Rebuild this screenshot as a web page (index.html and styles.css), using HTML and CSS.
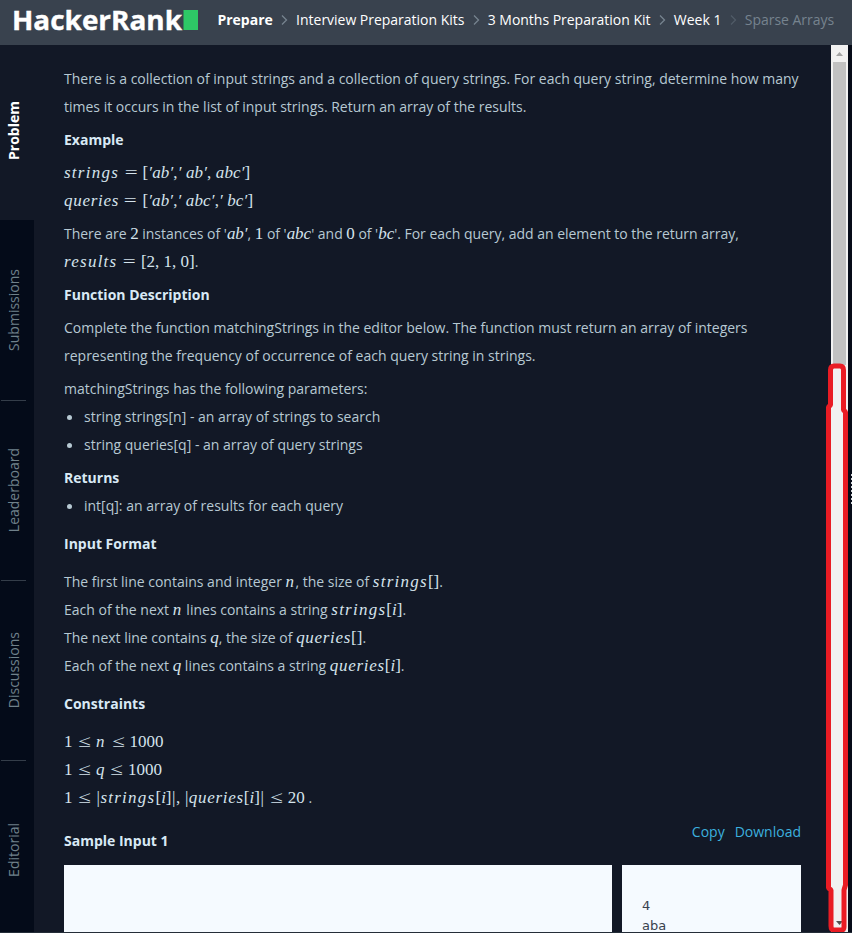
FILE: index.html
```html
<!DOCTYPE html>
<html lang="en">
<head>
<meta charset="utf-8">
<title>Sparse Arrays | HackerRank</title>
<link rel="stylesheet" href="styles.css">
</head>
<body>
<header class="topbar">
  <svg class="logo" width="186" height="45" viewBox="0 0 186 45"><text class="wordmark" x="-1" y="30" textLength="170" lengthAdjust="spacingAndGlyphs">HackerRank</text><rect x="170.500" y="10" width="14.500" height="20" fill="#2ec866"/></svg>
  <nav class="crumbs">
    <b>Prepare</b><svg class="chev" viewBox="0 0 8 12"><path d="M2 1.500L6.500 6L2 10.500"/></svg>
    <span>Interview Preparation Kits</span><svg class="chev" viewBox="0 0 8 12"><path d="M2 1.500L6.500 6L2 10.500"/></svg>
    <span>3 Months Preparation Kit</span><svg class="chev" viewBox="0 0 8 12"><path d="M2 1.500L6.500 6L2 10.500"/></svg>
    <span>Week 1</span><svg class="chev dim" viewBox="0 0 8 12"><path d="M2 1.500L6.500 6L2 10.500"/></svg>
    <span class="current">Sparse Arrays</span>
  </nav>
</header>
<div class="layout">
  <aside class="tabs">
    <div class="tab active"><span>Problem</span></div>
    <div class="tab"><span>Submissions</span></div>
    <div class="tab"><span>Leaderboard</span></div>
    <div class="tab"><span>Discussions</span></div>
    <div class="tab"><span>Editorial</span></div>
  </aside>
  <main class="content">
    <p>There is a collection of input strings and a collection of query strings. For each query string, determine how many<br>times it occurs in the list of input strings. Return an array of the results.</p>
    <h3>Example</h3>
    <p><span class="m list"><i class="s">strings</i><u>=</u>[<i>′ab′</i>,<i>′ ab′</i>, <i>abc′</i>]</span><br><span class="m list"><i class="q">queries</i><u>=</u>[<i>′ab′</i>,<i>′ abc′</i>,<i>′ bc′</i>]</span></p>
    <p class="snug">There are <span class="m">2</span> instances of '<span class="m"><i>ab′</i></span>, <span class="m">1</span> of '<span class="m"><i>abc</i></span>' and <span class="m">0</span> of '<span class="m"><i>bc</i></span>'. For each query, add an element to the return array,<br><span class="m"><i class="s">results</i><u>=</u>[2, 1, 0]</span>.</p>
    <h3>Function Description</h3>
    <p>Complete the function matchingStrings in the editor below. The function must return an array of integers<br>representing the frequency of occurrence of each query string in strings.</p>
    <p class="tight">matchingStrings has the following parameters:</p>
    <ul><li>string strings[n] - an array of strings to search</li><li>string queries[q] - an array of query strings</li></ul>
    <h3 class="tight">Returns</h3>
    <ul class="last"><li>int[q]: an array of results for each query</li></ul>
    <h3 class="section">Input Format</h3>
    <p class="lines">The first line contains and integer <span class="m"><i class="n">n</i></span>, the size of <span class="m"><i class="s">strings</i>[]</span>.<br>Each of the next <span class="m"><i class="n">n</i></span> lines contains a string <span class="m"><i class="s">strings</i>[<i>i</i>]</span>.<br>The next line contains <span class="m"><i>q</i></span>, the size of <span class="m"><i class="q">queries</i>[]</span>.<br>Each of the next <span class="m"><i>q</i></span> lines contains a string <span class="m"><i class="q">queries</i>[<i>i</i>]</span>.</p>
    <h3 class="section">Constraints</h3>
    <p class="lines"><span class="m">1<u>≤</u><i class="n">n</i><u>≤</u>1000</span><br><span class="m">1<u>≤</u><i>q</i><u>≤</u>1000</span><br><span class="m">1<u>≤</u><b>|</b><i class="s">strings</i>[<i>i</i>]<b>|</b>, <b>|</b><i class="q">queries</i>[<i>i</i>]<b>|</b><u>≤</u>20</span> .</p>
    <div class="samplehead"><h3>Sample Input 1</h3><div class="links"><a>Copy</a><a>Download</a></div></div>
    <div class="samples"><div class="box"></div><pre class="box">4
aba</pre></div>
  </main>
  <div class="scroll"><svg width="17" height="17" viewBox="0 0 17 17"><path d="M5 11L8.500 7L12 11Z" fill="#a3a3a3"/></svg><div class="thumb"></div><svg class="down" width="17" height="17" viewBox="0 0 17 17"><path d="M5 5H12L8.500 9Z" fill="#505050"/></svg></div>
  <div class="gutter"><div class="grip"></div></div>
</div>
<svg class="mark" width="24" height="572" viewBox="0 0 24 572"><path d="M6.500 44V9Q6.500 5 10 5H16Q19.500 5 19.500 9V49L21.500 51V524L20 529V566Q20 569 17 569H10Q7 569 7 565V529L4.500 527V46Z"/></svg>
<div class="bottomline"></div>
</body>
</html>
```
FILE: styles.css
```css
* { box-sizing: border-box; }
body { margin: 0; height: 933px; overflow: hidden; position: relative; background: #121826; color: #b7c9d3; font: 14px/28px "Open Sans", sans-serif; }
.topbar { height: 45px; background: #39424e; display: flex; }
.logo { margin-left: 13px; flex: none; }
.wordmark { font: 700 27.500px "Open Sans", sans-serif; fill: #fff; stroke: #fff; stroke-width: .4; }
.crumbs { margin-left: 18.500px; height: 40px; display: flex; align-items: center; color: #fff; white-space: nowrap; letter-spacing: -.02px; }
.chev { width: 8px; height: 12px; margin: 0 7.700px; fill: none; stroke: #76838f; stroke-width: 1.3; flex: none; }
.dim { stroke: #505b67; }
.current { color: #76838f; }
.layout { display: flex; height: 888px; }
.tabs { width: 34px; background: #040b19; flex: none; }
.tab { height: 180px; display: flex; align-items: center; color: #70818b; }
.tab span { writing-mode: vertical-rl; transform: rotate(180deg); line-height: 28px; }
.tab.active { height: 175px; background: #121826; color: #fff; font-weight: 700; padding-bottom: 5px; }
.tab + .tab + .tab { background: linear-gradient(#343d49, #343d49) 1px 0 / 25px 1px no-repeat; }
.content { width: 797px; padding: 20px 30px 0; flex: none; white-space: nowrap; }
p, h3 { margin: 0 0 5px; }
h3 { font-size: 14px; font-weight: 700; color: #d9e9f5; }
.tight { margin-bottom: 0; }
.snug { letter-spacing: -.02px; }
ul { list-style: none; margin: 0 0 5px; padding: 0; }
li { padding-left: 20px; display: flex; align-items: center; }
li::before { content: ""; width: 5px; height: 5px; margin: 0 12px 0 -17px; border-radius: 50%; background: #b7c9d3; }
.last, .section, .lines { margin-bottom: 10px; }
.m { font: 17px/20px "Liberation Serif", serif; color: #d5e3ec; }
.m u { text-decoration: none; margin: 0 5.500px; display: inline-block; width: 12.500px; text-align: center; transform: scaleX(1.35); letter-spacing: 0; }
.m b { font-weight: 400; margin: 0 .5px; }
.list { letter-spacing: .13px; }
.n { letter-spacing: 1.500px; }
.m .s { letter-spacing: 1.250px; }
.m .q { letter-spacing: .7px; }
.samplehead { display: flex; justify-content: space-between; margin-top: 15px; height: 38px; }
.links { margin-top: -9px; display: flex; gap: 10px; color: #3cb0df; }
.samples { display: flex; gap: 10px; }
.box { background: #f5faff; width: 548px; height: 80px; margin: 0; }
pre.box { width: 179px; padding: 31px 20px; color: #39424e; font: 13px/20px "DejaVu Sans", sans-serif; }
.scroll { width: 17px; background: #f1f1f1; flex: none; display: flex; flex-direction: column; align-items: center; }
.scroll svg { flex: none; }
.thumb { width: 13px; height: 303px; background: #c1c1c1; }
.down { margin-top: auto; }
.gutter { flex: 1; background: #060b18; padding: 429px 0 0 3px; }
.grip { height: 30px; width: 1px; background: repeating-linear-gradient(#d5d9dd 0 2px, transparent 2px 4px); }
.mark { position: absolute; left: 824px; top: 361px; fill: none; stroke: #e91c24; stroke-width: 5; stroke-linejoin: bevel; }
.bottomline { position: absolute; left: 0; right: 0; bottom: 0; height: 1px; background: #242d38; }
```
